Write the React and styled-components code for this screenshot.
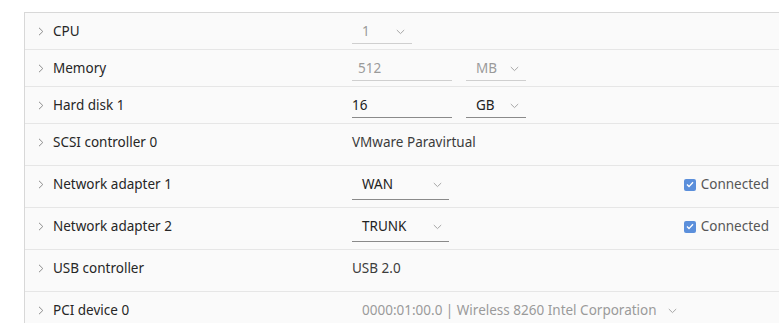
import React from 'react'
import styled, { createGlobalStyle } from 'styled-components'

const Global = createGlobalStyle`
  html, body {
    margin: 0;
    background: #fff;
    overflow: hidden;
  }
  body {
    font-family: "Noto Sans", "Lato", sans-serif;
  }
`

const Page = styled.div`
  padding: 12px 0 0 24px;
`

const Panel = styled.div`
  background: #fafafa;
  border-top: 1px solid #d8d8d8;
  border-left: 1px solid #d8d8d8;
`

const Row = styled.div`
  display: flex;
  align-items: flex-start;
  box-sizing: border-box;
  height: ${p => p.tall ? 42 : 37}px;
  border-bottom: 1px solid #e6e6e6;
  padding: 10px 10px 0 13px;
  line-height: 17px;
`

const Caret = styled.span`
  width: 15px;
  height: 17px;
  display: flex;
  align-items: center;
  color: #8c8c8c;
`

const Label = styled.div`
  width: 299px;
  font-size: 13.5px;
  color: #262626;
`

const Value = styled.div`
  flex: 1;
  display: flex;
  align-items: flex-start;
  font-size: 13.5px;
  color: #3c3c3c;
`

const Field = styled.div`
  width: ${p => p.w}px;
  margin-right: ${p => p.gap || 0}px;
  height: ${p => p.tall ? 23 : 20}px;
  box-sizing: content-box;
  display: flex;
  align-items: flex-start;
  justify-content: space-between;
  padding: 0 ${p => p.select ? 7 : 0}px 0 ${p => p.pad || 0}px;
  border-bottom: 1px solid ${p => p.off ? '#cfcfcf' : '#8a8a8a'};
  color: ${p => p.off ? '#9a9a9a' : '#222'};
  font-size: 13.5px;
  white-space: nowrap;

  svg {
    margin-top: 6px;
    flex: none;
  }
`

const Spacer = styled.div`
  flex: 1;
`

const Check = styled.label`
  display: flex;
  align-items: center;
  gap: 5px;
  color: #565656;
  font-size: 13.5px;
`

const Box = styled.span`
  width: 12px;
  height: 12px;
  border-radius: 2px;
  background: #5b8fdb;
  display: flex;
  align-items: center;
  justify-content: center;
`

const Chevron = () => (
  <svg width="6" height="9" viewBox="0 0 6 9">
    <path d="M1 0.8 L4.8 4.5 L1 8.2" fill="none" stroke="currentColor" strokeWidth="1" />
  </svg>
)

const Down = () => (
  <svg width="9" height="6" viewBox="0 0 9 6">
    <path d="M0.8 1 L4.5 4.6 L8.2 1" fill="none" stroke="#a6a6a6" strokeWidth="1" />
  </svg>
)

const Tick = () => (
  <svg width="8" height="7" viewBox="0 0 8 7">
    <path d="M1 3.6 L3 5.6 L7 1.2" fill="none" stroke="#fff" strokeWidth="1.4" />
  </svg>
)

const Select = ({ w, off, children, gap, tall }) => (
  <Field w={w - 17} off={off} select pad={10} gap={gap} tall={tall}>
    <span>{children}</span>
    <Down />
  </Field>
)

const Item = ({ label, tall, children }) => (
  <Row tall={tall}>
    <Caret><Chevron /></Caret>
    <Label>{label}</Label>
    <Value>{children}</Value>
  </Row>
)

const Connected = () => (
  <>
    <Spacer />
    <Check><Box><Tick /></Box>Connected</Check>
  </>
)

export default function App() {
  return (
    <Page>
      <Global />
      <Panel>
        <Item label="CPU">
          <Select w={60} off>1</Select>
        </Item>
        <Item label="Memory">
          <Field w={94} off pad={6} gap={14}>512</Field>
          <Select w={60} off>MB</Select>
        </Item>
        <Item label="Hard disk 1">
          <Field w={100} gap={14}>16</Field>
          <Select w={60}>GB</Select>
        </Item>
        <Item label="SCSI controller 0" tall>VMware Paravirtual</Item>
        <Item label="Network adapter 1" tall>
          <Select w={97} tall>WAN</Select>
          <Connected />
        </Item>
        <Item label="Network adapter 2" tall>
          <Select w={97} tall>TRUNK</Select>
          <Connected />
        </Item>
        <Item label="USB controller" tall>USB 2.0</Item>
        <Item label="PCI device 0" tall>
          <Select w={332} off tall>0000:01:00.0 | Wireless 8260 Intel Corporation</Select>
        </Item>
      </Panel>
    </Page>
  )
}
